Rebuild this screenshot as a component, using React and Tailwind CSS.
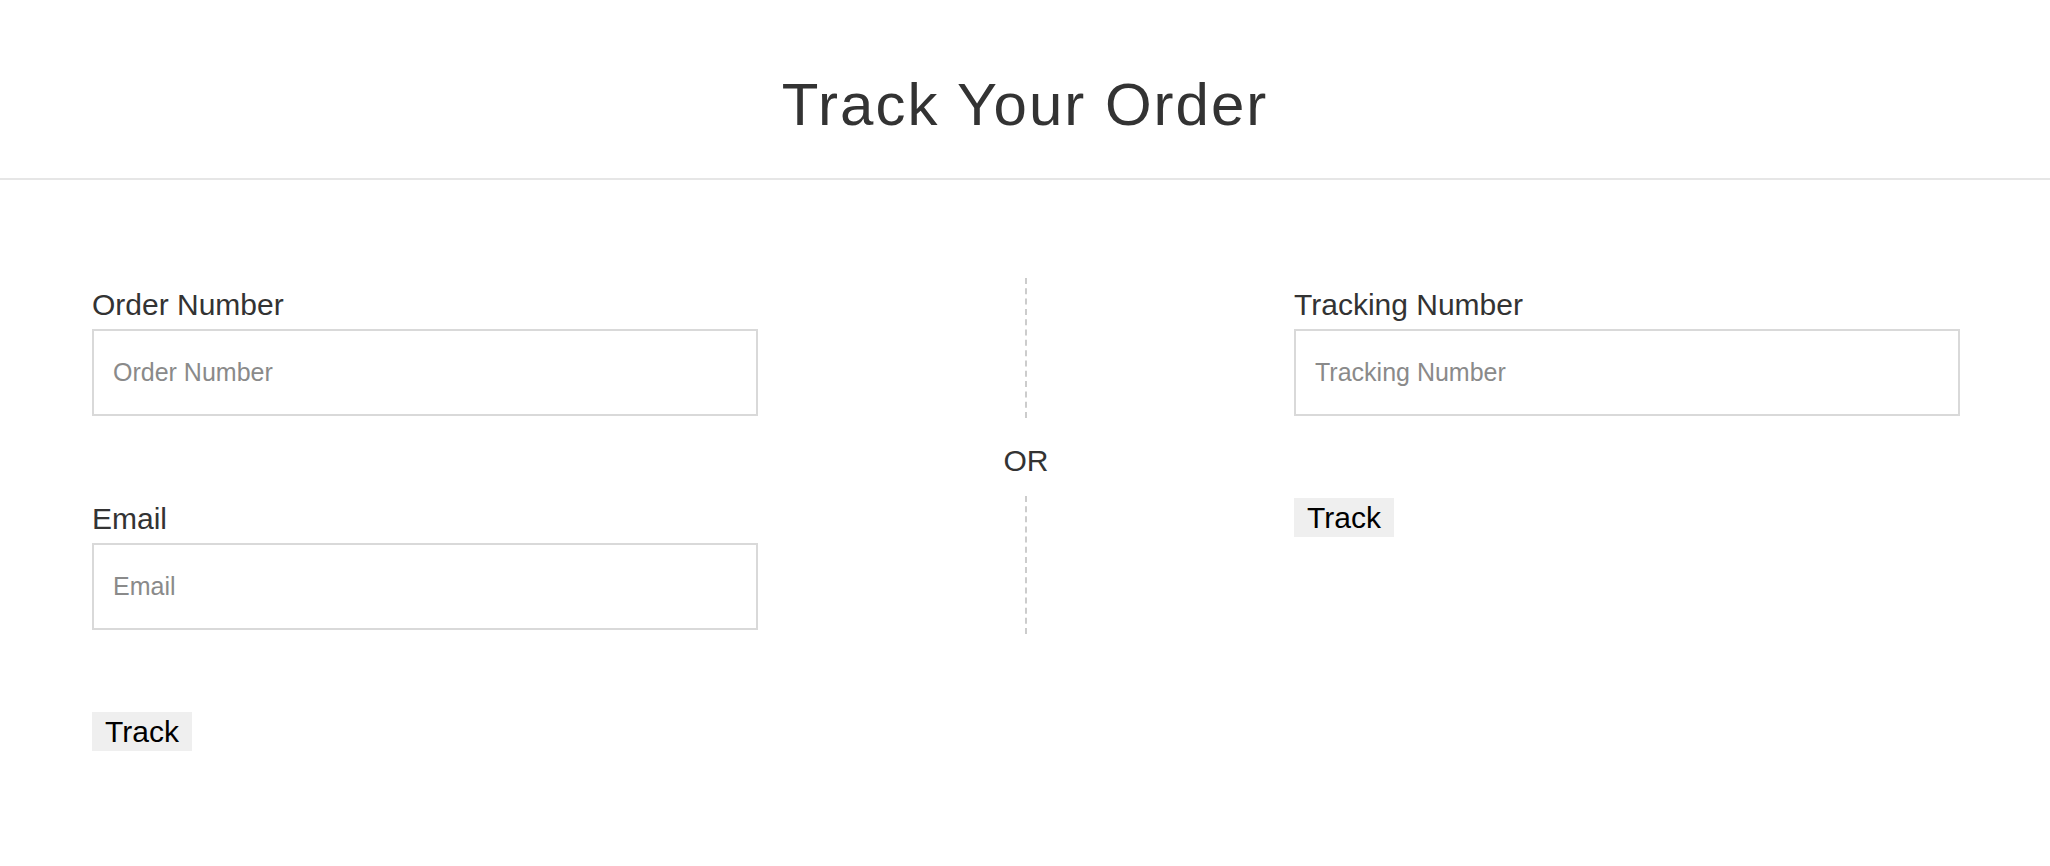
import React from "react";

function Field({ label, placeholder }) {
  return (
    <div className="flex flex-col">
      <label className="block text-[30px] leading-[34px] text-[#333333] mb-[7px]">{label}</label>
      <input
        type="text"
        placeholder={placeholder}
        className="w-full h-[87px] border-2 border-[#d9d9d9] bg-white px-[19px] text-[25px] text-[#333333] placeholder:text-[#8a8a8a] outline-none"
        style={{ fontFamily: '"Liberation Sans", Arial, sans-serif' }}
      />
    </div>
  );
}

function TrackButton() {
  return (
    <button
      type="button"
      className="w-[100px] h-[39px] bg-[#efefef] text-[30px] leading-[39px] text-black text-center"
      style={{ fontFamily: '"Liberation Sans", Arial, sans-serif' }}
    >
      Track
    </button>
  );
}

export default function App() {
  return (
    <div
      className="min-h-[866px] w-full bg-white"
      style={{ fontFamily: '"Liberation Sans", Arial, sans-serif' }}
    >
      <header className="border-b-2 border-[#e6e6e6] pt-[70px] pb-[39px]">
        <h1 className="text-center text-[60px] leading-[69px] tracking-[2px] text-[#333333] font-normal">
          Track Your Order
        </h1>
      </header>

      <main className="grid grid-cols-[666px_1fr_666px] pl-[92px] pr-[90px] pt-[98px] items-start">
        <div className="flex flex-col pt-[10px]">
          <Field label="Order Number" placeholder="Order Number" />
          <div className="mt-[86px]">
            <Field label="Email" placeholder="Email" />
          </div>
          <div className="mt-[82px]">
            <TrackButton />
          </div>
        </div>

        <div className="flex flex-col items-center">
          <div className="h-[140px] border-l-2 border-dashed border-[#cccccc]" />
          <div className="mt-[26px] text-[30px] leading-[34px] text-[#333333]">OR</div>
          <div className="mt-[18px] h-[138px] border-l-2 border-dashed border-[#cccccc]" />
        </div>

        <div className="flex flex-col pt-[10px]">
          <Field label="Tracking Number" placeholder="Tracking Number" />
          <div className="mt-[82px]">
            <TrackButton />
          </div>
        </div>
      </main>
    </div>
  );
}
